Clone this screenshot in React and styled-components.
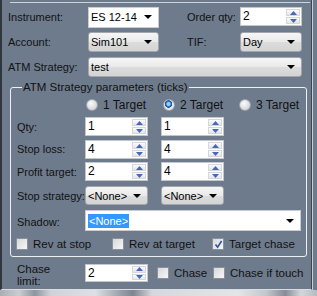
import React from "react";
import styled, { createGlobalStyle } from "styled-components";

const Global = createGlobalStyle`
  html, body { margin: 0; padding: 0; background: #6e7b8c; }
  body { font-family: "Liberation Sans", Arial, sans-serif; font-size: 11px; color: #121212; }
`;

const Screen = styled.div`
  width: 317px;
  height: 296px;
  overflow: hidden;
  background: #6e7b8c;
  display: flex;
  flex-direction: column;
`;

const Frame = styled.div`
  box-sizing: border-box;
  width: 312px;
  height: 290px;
  padding: 2px 0 0 6px;
  border-left: 2px solid #30363e;
  border-right: 1px solid #3d4550;
  border-bottom: 1px solid #d9dde2;
  box-shadow: 1px 0 0 #c9ced5;
`;

const TopRule = styled.div`
  margin-left: 2px;
  width: 300px;
  height: 1px;
  background: #cdd2d8;
`;

const TopGrid = styled.div`
  margin-top: 4px;
  display: grid;
  grid-template-columns: 80px 71px 28px 53px 62px;
  grid-template-rows: 20px 20px 20px;
  row-gap: 5px;
  align-items: center;
`;

const Label = styled.span`
  white-space: nowrap;
  grid-column: ${p => p.col || "1"};
`;

const Cell = styled.div`
  grid-column: ${p => p.span || "auto"};
  height: ${p => p.h || 20}px;
  align-self: ${p => p.top ? "start" : "center"};
`;

const Combo = styled.div`
  box-sizing: border-box;
  height: 100%;
  width: 100%;
  display: flex;
  align-items: center;
  justify-content: space-between;
  padding: 0 6px 0 2px;
  border: 1px solid ${p => p.flat ? "#c9cdd2" : "#a3a7ad"};
  border-radius: ${p => p.flat ? 0 : 3}px;
  background: ${p => p.flat ? "#ffffff" : "linear-gradient(#f6f6f6, #e9e9e9 50%, #dcdcdc 51%, #d4d4d4)"};
  color: #000;
`;

const Selected = styled.span`
  background: #3399ff;
  color: #fff;
  padding: 1px 1px;
`;

const Arrow = () => (
  <svg width="8" height="4" viewBox="0 0 8 4">
    <path d="M0 0 H8 L4 4 Z" fill="#000" />
  </svg>
);

const Spin = styled.div`
  box-sizing: border-box;
  height: 100%;
  width: 100%;
  display: flex;
  background: #fff;
  border: 1px solid #c3c7cc;
`;

const SpinText = styled.span`
  flex: 1;
  padding: 1px 0 0 2px;
  font-size: 12px;
  color: #000;
`;

const SpinButtons = styled.div`
  width: 14px;
  display: flex;
  flex-direction: column;
  gap: 1px;
  padding: 1px;
`;

const SpinBtn = styled.div`
  flex: 1;
  display: flex;
  align-items: center;
  justify-content: center;
  border: 1px solid #d4d8de;
  background: linear-gradient(#fafbfc, #e3e6ea);
`;

const SpinArrow = ({ down }) => (
  <svg width="7" height="4" viewBox="0 0 7 4">
    <path d={down ? "M0 0 H7 L3.5 4 Z" : "M0 4 H7 L3.5 0 Z"} fill="#4867b4" />
  </svg>
);

const Spinner = ({ value }) => (
  <Spin>
    <SpinText>{value}</SpinText>
    <SpinButtons>
      <SpinBtn><SpinArrow /></SpinBtn>
      <SpinBtn><SpinArrow down /></SpinBtn>
    </SpinButtons>
  </Spin>
);

const Group = styled.fieldset`
  box-sizing: border-box;
  margin: 3px 0 0 2px;
  width: 297px;
  min-width: 0;
  padding: 3px 4px 6px 6px;
  border: 1px solid #eef1f4;
  border-radius: 3px;
`;

const Legend = styled.legend`
  padding: 0 1px;
  margin-left: 5px;
  line-height: 14px;
  font-size: 11.5px;
  white-space: nowrap;
`;

const GroupGrid = styled.div`
  display: grid;
  grid-template-columns: 68px 63px 13px 63px 77px;
  grid-template-rows: 16px 19px 18px 20px 20px 24px 12px;
  row-gap: 4px;
  align-items: center;
`;

const Line = styled.div`
  grid-column: 1 / -1;
  display: flex;
  align-items: center;
  padding-left: ${p => p.pad || 0}px;
  margin-left: ${p => p.shift || 0}px;
`;

const Option = styled.div`
  width: ${p => p.w ? `${p.w}px` : "auto"};
  display: flex;
  align-items: center;
  gap: ${p => p.gap || 5}px;
  white-space: nowrap;
  font-size: ${p => p.big ? 12 : 11.5}px;
`;

const RadioDot = styled.span`
  box-sizing: border-box;
  width: 12px;
  height: 12px;
  border-radius: 50%;
  border: 1px solid #9ea3a8;
  background: ${p => p.on
    ? "radial-gradient(circle at 45% 40%, #8fd0f5 0 1.5px, #2b74c2 2.5px, #1d4f92 3.5px, #dfe2e6 4px, #f4f4f4 100%)"
    : "radial-gradient(circle at 40% 35%, #fbfbfb, #d5d7da 70%)"};
`;

const Box = styled.span`
  box-sizing: border-box;
  width: 12px;
  height: 12px;
  border: 1px solid #8d9096;
  background: linear-gradient(135deg, #d6d8db, #f7f7f7);
  display: flex;
  align-items: center;
  justify-content: center;
`;

const Check = ({ on, label, w, gap }) => (
  <Option w={w} gap={gap}>
    <Box>
      {on && (
        <svg width="9" height="9" viewBox="0 0 9 9">
          <path d="M1.5 4.5 L3.6 7.2 L7.6 1" stroke="#2e52a6" strokeWidth="1.6" fill="none" />
        </svg>
      )}
    </Box>
    <span>{label}</span>
  </Option>
);

const ChaseRow = styled.div`
  margin: 6px 0 0 9px;
  display: flex;
  align-items: flex-start;
`;

const TwoLine = styled.div`
  width: 68px;
  line-height: 12px;
  font-size: 11.5px;
`;

const SpinSlot = styled.div`
  width: 63px;
  height: 18px;
  margin-top: 1px;
`;

const CheckSlot = styled.div`
  margin: 4px 0 0 9px;
  display: flex;
`;

const Shelf = styled.div`
  height: 6px;
  background: linear-gradient(90deg, #a9aeb5 0%, #c9cdd2 6%, #8f959d 11%, #cfd3d8 16%, #dde0e4 30%, #9ba1a9 38%, #7f858e 42%, #d5d8dc 48%, #e3e5e8 75%, #c3c7cc 84%, #878d96 90%, #d3d6da 95%, #b7bbc1 100%);
`;

export default function App() {
  return (
    <Screen>
      <Global />
      <Frame>
        <TopRule />
        <TopGrid>
          <Label>Instrument:</Label>
          <Cell h={21}><Combo flat><span>ES 12-14</span><Arrow /></Combo></Cell>
          <Label col="4">Order qty:</Label>
          <Cell h={19} top><Spinner value="2" /></Cell>

          <Label>Account:</Label>
          <Cell><Combo><span>Sim101</span><Arrow /></Combo></Cell>
          <Label col="4">TIF:</Label>
          <Cell><Combo><span>Day</span><Arrow /></Combo></Cell>

          <Label>ATM Strategy:</Label>
          <Cell span="2 / 6"><Combo><span>test</span><Arrow /></Combo></Cell>
        </TopGrid>

        <Group>
          <Legend>ATM Strategy parameters (ticks)</Legend>
          <GroupGrid>
            <Line pad={69}>
              <Option w={77} big><RadioDot /><span>1 Target</span></Option>
              <Option w={76} big><RadioDot on /><span>2 Target</span></Option>
              <Option big><RadioDot /><span>3 Target</span></Option>
            </Line>

            <Label>Qty:</Label>
            <Cell h={19}><Spinner value="1" /></Cell>
            <Cell span="4" h={19}><Spinner value="1" /></Cell>

            <Label>Stop loss:</Label>
            <Cell h={19} top><Spinner value="4" /></Cell>
            <Cell span="4" h={19} top><Spinner value="4" /></Cell>

            <Label>Profit target:</Label>
            <Cell h={19} top><Spinner value="2" /></Cell>
            <Cell span="4" h={19} top><Spinner value="4" /></Cell>

            <Label>Stop strategy:</Label>
            <Cell h={19} top><Combo>&lt;None&gt;<Arrow /></Combo></Cell>
            <Cell span="4" h={19} top><Combo>&lt;None&gt;<Arrow /></Combo></Cell>

            <Label>Shadow:</Label>
            <Cell span="2 / 6" h={21} top><Combo flat><Selected>&lt;None&gt;</Selected><Arrow /></Combo></Cell>

            <Line shift={-1}>
              <Check w={96} label="Rev at stop" />
              <Check w={100} label="Rev at target" />
              <Check on label="Target chase" />
            </Line>
          </GroupGrid>
        </Group>

        <ChaseRow>
          <TwoLine>Chase<br />limit:</TwoLine>
          <SpinSlot><Spinner value="2" /></SpinSlot>
          <CheckSlot>
            <Check w={56} label="Chase" />
            <Check label="Chase if touch" />
          </CheckSlot>
        </ChaseRow>
      </Frame>
      <Shelf />
    </Screen>
  );
}
